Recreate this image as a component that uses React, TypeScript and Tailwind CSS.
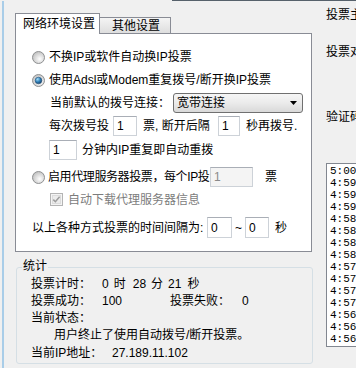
const font = "font-['Liberation_Sans','Noto_Sans_CJK_SC',sans-serif]";

function Radio({ on }: { on?: boolean }) {
  return (
    <svg width="13" height="13" viewBox="0 0 13 13" className="shrink-0">
      <defs>
        <radialGradient id="rOff" cx="60%" cy="62%" r="60%">
          <stop offset="0%" stopColor="#ffffff" />
          <stop offset="100%" stopColor="#c4c4c4" />
        </radialGradient>
        <radialGradient id="rOn" cx="35%" cy="30%" r="75%">
          <stop offset="0%" stopColor="#a6e0fb" />
          <stop offset="55%" stopColor="#2f80b8" />
          <stop offset="100%" stopColor="#173f66" />
        </radialGradient>
      </defs>
      <circle cx="6.5" cy="6.5" r="6" fill="url(#rOff)" stroke="#8f9192" />
      {on && <circle cx="6.5" cy="6.5" r="3.3" fill="url(#rOn)" stroke="#1e4d78" strokeWidth="0.6" />}
    </svg>
  );
}

function Check() {
  return (
    <svg width="13" height="13" viewBox="0 0 13 13" className="shrink-0">
      <rect x="0.5" y="0.5" width="12" height="12" fill="#f4f4f4" stroke="#b4b4b4" />
      <rect x="2.5" y="2.5" width="8" height="8" fill="#ececec" stroke="#dcdcdc" />
      <path d="M3.3 6.6 L5.4 8.7 L9.6 3.8" fill="none" stroke="#9d9d9d" strokeWidth="1.5" />
    </svg>
  );
}

function Field({ value, className, disabled }: { value: string; className: string; disabled?: boolean }) {
  return (
    <div
      className={`h-full shrink-0 flex items-center pl-[3px] border border-[#cdd2d8] border-t-[#a9aeb6] ${
        disabled ? 'bg-[#f4f4f4] text-[#8a8a8a]' : 'bg-white'
      } ${className}`}
    >
      {value}
    </div>
  );
}

export default function App() {
  const times = ['5:00', '4:59', '4:59', '4:59', '4:58', '4:58', '4:58', '4:58', '4:57', '4:57', '4:57', '4:57', '4:56', '4:56', '4:56'];

  return (
    <div className={`w-[356px] h-[368px] overflow-hidden bg-[#f0f0f0] text-[12px] leading-[14px] text-black flex flex-col ${font}`}>
      <div className="h-px ml-[172px] bg-[#56616b] shrink-0" />
      <div className="flex flex-1 min-h-0">
        <div className="ml-[2px] w-[2px] bg-[#a9cde8] shrink-0" />

        {/* left: tabs + stats */}
        <div className="ml-[11px] w-[297px] shrink-0 flex flex-col whitespace-nowrap">
          <div className="mt-[12px] h-[20px] flex items-end">
            <div className="relative z-10 -mb-px h-[21px] w-[85px] bg-white border border-b-0 border-[#898c95] flex items-center pl-[7px] pb-[1px]">
              网络环境设置
            </div>
            <div className="h-[16px] w-[71px] border border-b-0 border-l-0 border-[#898c95] bg-linear-to-b from-[#f4f4f4] to-[#dedede] flex items-center pl-[12px]">
              其他设置
            </div>
          </div>

          <div className="h-[219px] border border-[#898c95] bg-white flex flex-col">
            <div className="mt-[15px] h-[16px] flex items-center pl-[16px]">
              <Radio />
              <span className="ml-[4px]">不换IP或软件自动换IP投票</span>
            </div>
            <div className="mt-[7px] h-[16px] flex items-center pl-[16px]">
              <Radio on />
              <span className="ml-[4px]">使用Adsl或Modem重复拨号/断开换IP投票</span>
            </div>
            <div className="mt-[5px] h-[20px] flex items-center pl-[34px]">
              <span>当前默认的拨号连接：</span>
              <div className="ml-[3px] w-[130px] h-full rounded-[3px] border border-[#707070] bg-linear-to-b from-[#f6f6f6] via-[#ebebeb] to-[#d9d9d9] flex items-center pl-[3px] pr-[5px]">
                <span className="flex-1">宽带连接</span>
                <svg width="7" height="4" viewBox="0 0 7 4">
                  <path d="M0 0 H7 L3.5 4 Z" fill="#000" />
                </svg>
              </div>
            </div>
            <div className="mt-[3px] h-[20px] flex items-center pl-[33px]">
              <span>每次拨号投</span>
              <Field value="1" className="ml-[4px] w-[24px]" />
              <span className="ml-[6px] w-[75px]">票, 断开后隔</span>
              <Field value="1" className="w-[22px]" />
              <span className="ml-[6px]">秒再拨号.</span>
            </div>
            <div className="mt-[4px] h-[20px] flex items-center pl-[33px]">
              <Field value="1" className="w-[28px]" />
              <span className="ml-[5px]">分钟内IP重复即自动重拨</span>
            </div>
            <div className="mt-[7px] h-[20px] flex items-center pl-[16px]">
              <Radio />
              <span className="ml-[3px] w-[162px] tracking-[-0.4px]">启用代理服务器投票，每个IP投</span>
              <Field value="1" className="w-[43px]" disabled />
              <span className="ml-[12px]">票</span>
            </div>
            <div className="mt-[6px] h-[13px] flex items-center pl-[34px]">
              <Check />
              <span className="ml-[5px] text-[#7c7c7c]">自动下载代理服务器信息</span>
            </div>
            <div className="mt-[11px] h-[21px] flex items-center pl-[16px]">
              <span className="w-[175px]">以上各种方式投票的时间间隔为:</span>
              <Field value="0" className="w-[25px]" />
              <span className="w-[13px] text-center">~</span>
              <Field value="0" className="w-[24px]" />
              <span className="ml-[6px]">秒</span>
            </div>
          </div>

          <div className="mt-[15px] ml-[1px] w-[297px] h-[97px] border border-[#d5dfe5] rounded-[3px] flex flex-col">
            <span className="-mt-[8px] ml-[5px] px-[1px] w-fit h-[12px] leading-[12px] bg-[#f0f0f0]">统计</span>
            <div className="mt-[3px] h-[17px] flex items-center pl-[14px]">
              <span className="w-[71px]">投票计时：</span>
              <span>0</span>
              <span className="ml-[5px]">时</span>
              <span className="ml-[7px]">28</span>
              <span className="ml-[5px]">分</span>
              <span className="ml-[5px]">21</span>
              <span className="ml-[6px]">秒</span>
            </div>
            <div className="h-[17px] flex items-center pl-[14px]">
              <span className="w-[71px]">投票成功：</span>
              <span className="w-[68px]">100</span>
              <span className="w-[72px]">投票失败：</span>
              <span>0</span>
            </div>
            <div className="h-[17px] flex items-center pl-[14px]">当前状态：</div>
            <div className="h-[17px] flex items-center pl-[37px]">用户终止了使用自动拨号/断开投票。</div>
            <div className="mt-[1px] h-[17px] flex items-center pl-[14px]">
              <span className="w-[81px]">当前IP地址：</span>
              <span>27.189.11.102</span>
            </div>
          </div>
        </div>

        {/* right: cut-off side panel */}
        <div className="ml-[14px] w-[80px] shrink-0 flex flex-col whitespace-nowrap">
          <span className="mt-[8px] leading-[12px]">投票主题:</span>
          <span className="mt-[25px] leading-[12px]">投票对象:</span>
          <span className="mt-[53px] leading-[12px]">验证码:</span>
          <div className="mt-[40px] h-[184px] border border-[#828790] bg-white pt-[1px] pl-[3px] font-['Liberation_Mono',monospace] text-[11px] leading-[12px]">
            {times.map((t, i) => (
              <div key={i} className="h-[12px]">
                {t}
              </div>
            ))}
          </div>
        </div>
      </div>
    </div>
  );
}
